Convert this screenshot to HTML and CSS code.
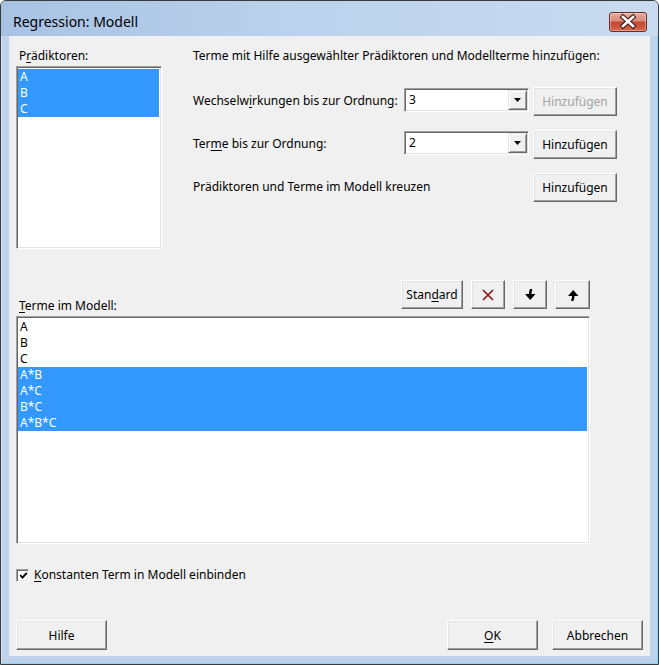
FILE: index.html
```html
<!DOCTYPE html>
<html lang="de">
<head>
    <meta charset="UTF-8">
    <title>Regression: Modell</title>
    <link rel="stylesheet" href="styles.css">
</head>
<body>
    <div class="window">
        <div class="titlebar">
            <span class="title">Regression: Modell</span>
            <button class="close" title="Schließen">
                <svg width="38" height="20" viewBox="0 0 38 20">
                    <path d="M14 5 L24 14 M24 5 L14 14" stroke="#4a241d" stroke-width="5" stroke-linecap="square"/>
                    <path d="M14 5 L24 14 M24 5 L14 14" stroke="#fff" stroke-width="2.6" stroke-linecap="square"/>
                </svg>
            </button>
        </div>

        <div class="client">
            <div class="top">
                <div class="pred">
                    <div class="label">P<u>r</u>ädiktoren:</div>
                    <div class="listbox pred-list">
                        <div class="item sel">A</div>
                        <div class="item sel">B</div>
                        <div class="item sel">C</div>
                    </div>
                </div>

                <div class="terms">
                    <p class="intro">Terme mit Hilfe ausgewählter Prädiktoren und Modellterme hinzufügen:</p>
                    <div class="term-grid">
                        <span class="row-label">Wechselw<u>i</u>rkungen bis zur Ordnung:</span>
                        <div class="combo">
                            <span class="combo-value">3</span>
                            <span class="combo-btn"><svg width="7" height="4" viewBox="0 0 7 4"><polygon points="0,0 7,0 3.5,4" fill="#000"/></svg></span>
                        </div>
                        <button class="btn" disabled>Hinzufügen</button>

                        <span class="row-label">Ter<u>m</u>e bis zur Ordnung:</span>
                        <div class="combo">
                            <span class="combo-value">2</span>
                            <span class="combo-btn"><svg width="7" height="4" viewBox="0 0 7 4"><polygon points="0,0 7,0 3.5,4" fill="#000"/></svg></span>
                        </div>
                        <button class="btn">Hinzufügen</button>

                        <span class="row-label span-2">Prädiktoren und Terme im Modell kreuzen</span>
                        <button class="btn">Hinzufügen</button>
                    </div>
                </div>
            </div>

            <div class="model-head">
                <span class="label head-label"><u>T</u>erme im Modell:</span>
                <div class="tools">
                    <button class="btn std">Stan<u>d</u>ard</button>
                    <button class="btn icon" title="Löschen">
                        <svg width="12" height="12" viewBox="0 0 12 12">
                            <path d="M1 1 L11 11 M11 1 L1 11" stroke="#8e1515" stroke-width="1.7"/>
                        </svg>
                    </button>
                    <button class="btn icon" title="Nach unten">
                        <svg width="12" height="12" viewBox="0 0 12 12">
                            <path d="M7.5 0 Q6 2 6.2 5.5" stroke="#000" stroke-width="2.4" fill="none"/>
                            <polygon points="1,5 11.5,5 6.2,11" fill="#000"/>
                        </svg>
                    </button>
                    <button class="btn icon up" title="Nach oben">
                        <svg width="12" height="12" viewBox="0 0 12 12">
                            <polygon points="1,7 11.5,7 6.2,1" fill="#000"/>
                            <path d="M6.2 6.5 Q6.5 10 4.8 12" stroke="#000" stroke-width="2.4" fill="none"/>
                        </svg>
                    </button>
                </div>
            </div>

            <div class="listbox model-list">
                <div class="item">A</div>
                <div class="item">B</div>
                <div class="item">C</div>
                <div class="item sel">A*B</div>
                <div class="item sel">A*C</div>
                <div class="item sel">B*C</div>
                <div class="item sel">A*B*C</div>
            </div>

            <label class="check">
                <span class="box">
                    <svg width="9" height="9" viewBox="0 0 9 9"><path d="M1.2 4.2 L3.5 6.6 L7.8 1.8" stroke="#000" stroke-width="1.9" fill="none"/></svg>
                </span>
                <span><u>K</u>onstanten Term in Modell einbinden</span>
            </label>

            <div class="actions">
                <button class="btn btn-lg">Hilfe</button>
                <div class="actions-right">
                    <button class="btn btn-lg"><u>O</u>K</button>
                    <button class="btn btn-lg">Abbrechen</button>
                </div>
            </div>
        </div>
    </div>
</body>
</html>
```

FILE: styles.css
```css
body {
    margin: 0;
    font-family: "Noto Sans", "Liberation Sans", sans-serif;
    font-size: 12px;
    color: #000;
    background: #fff;
}

u {
    text-decoration-thickness: 1px;
    text-underline-offset: 2px;
}

.window {
    width: 659px;
    height: 665px;
    box-sizing: border-box;
    border: 1px solid #3a3a3a;
    border-radius: 6px 6px 0 0;
    background: #bfd4ec;
    padding: 0 8px 8px;
    display: flex;
    flex-direction: column;
    box-shadow: inset -1px -1px 0 #8ed2f3, inset 1px 1px 0 #d9e7f6;
}

.titlebar {
    height: 35px;
    margin: 0 -8px;
    display: flex;
    justify-content: space-between;
    align-items: flex-start;
    background: linear-gradient(90deg, #a7c2e3, #bcd2ec 45%, #c8dbf0);
    border-radius: 5px 5px 0 0;
}

.title {
    margin: 11px 0 0 12px;
    font-size: 14px;
    line-height: 20px;
    color: #000;
}

.close {
    width: 38px;
    height: 20px;
    margin: 11px 11px 0 0;
    padding: 0;
    border: 1px solid #6b2b20;
    border-radius: 3px;
    background: linear-gradient(#e6ab9e, #d88a78 45%, #c4462f 50%, #d2684f);
    box-shadow: inset 0 0 0 1px rgba(255,255,255,0.35);
    display: flex;
    align-items: center;
    justify-content: center;
    box-sizing: border-box;
}

.close svg {
    display: block;
    margin: -1px;
}

.client {
    flex: 1;
    background: #f0f0f0;
    padding: 12px 7px 6px;
    display: flex;
    flex-direction: column;
}

.top {
    display: flex;
    gap: 31px;
}

.pred {
    flex: none;
    width: 146px;
}

.label {
    line-height: 16px;
    padding-left: 3px;
}

.listbox {
    box-sizing: border-box;
    background: #fff;
    border: 1px solid;
    border-color: #a0a0a0 #fff #fff #a0a0a0;
    box-shadow: inset 1px 1px 0 #696969, inset -1px -1px 0 #e3e3e3;
    padding: 2px 2px 2px 1px;
}

.pred-list {
    margin-top: 2px;
    height: 183px;
}

.item {
    line-height: 16px;
    padding-left: 2px;
}

.item.sel {
    background: #3399ff;
    color: #fff;
}

.terms {
    flex: 1;
}

.intro {
    margin: 0;
    line-height: 16px;
    white-space: nowrap;
}

.term-grid {
    margin-top: 23px;
    display: grid;
    grid-template-columns: 207px 125px 84px;
    column-gap: 4px;
    row-gap: 14px;
}

.row-label {
    align-self: start;
    margin-top: 6px;
    line-height: 16px;
    white-space: nowrap;
}

.span-2 {
    grid-column: span 2;
}

.combo {
    align-self: start;
    margin-top: 1px;
    height: 24px;
    box-sizing: border-box;
    display: flex;
    background: #fff;
    border: 1px solid;
    border-color: #a0a0a0 #fff #fff #a0a0a0;
    box-shadow: inset 1px 1px 0 #696969, inset -1px -1px 0 #e3e3e3;
    padding: 1px;
}

.combo-value {
    flex: 1;
    padding-left: 3px;
    line-height: 20px;
}

.combo-btn {
    width: 19px;
    height: 20px;
    box-sizing: border-box;
    background: #f0f0f0;
    border: 1px solid;
    border-color: #e3e3e3 #696969 #696969 #e3e3e3;
    box-shadow: inset 1px 1px 0 #fff, inset -1px -1px 0 #a0a0a0;
    display: flex;
    align-items: center;
    justify-content: center;
}

.combo-btn svg {
    display: block;
}

.btn {
    height: 29px;
    box-sizing: border-box;
    padding: 0;
    font: inherit;
    color: #000;
    background: #f0f0f0;
    border: 1px solid;
    border-color: #fff #696969 #696969 #fff;
    box-shadow: inset -1px -1px 0 #a0a0a0, inset 1px 1px 0 #e3e3e3;
}

.btn:disabled {
    color: #a3a3a3;
}

.btn svg {
    display: block;
    margin: 0 auto;
}

.model-head {
    margin-top: 31px;
    width: 574px;
    display: flex;
    justify-content: space-between;
    align-items: flex-start;
}

.head-label {
    margin-top: 18px;
}

.tools {
    display: flex;
    gap: 8px;
}

.std {
    width: 62px;
}

.icon {
    width: 34px;
}

.icon.up {
    width: 35px;
}

.model-list {
    margin-top: 2px;
    width: 574px;
    height: 228px;
}

.check {
    margin-top: 23px;
    display: flex;
    align-items: center;
    gap: 5px;
    line-height: 16px;
}

.box {
    width: 13px;
    height: 13px;
    box-sizing: border-box;
    background: #fff;
    border: 1px solid;
    border-color: #a0a0a0 #fff #fff #a0a0a0;
    box-shadow: inset 1px 1px 0 #696969, inset -1px -1px 0 #e3e3e3;
    display: flex;
    align-items: center;
    justify-content: center;
}

.box svg {
    display: block;
    margin: 1px 0 0 1px;
}

.actions {
    margin-top: auto;
    display: flex;
    justify-content: space-between;
}

.actions-right {
    display: flex;
    gap: 14px;
}

.btn-lg {
    width: 91px;
    height: 30px;
}
```
